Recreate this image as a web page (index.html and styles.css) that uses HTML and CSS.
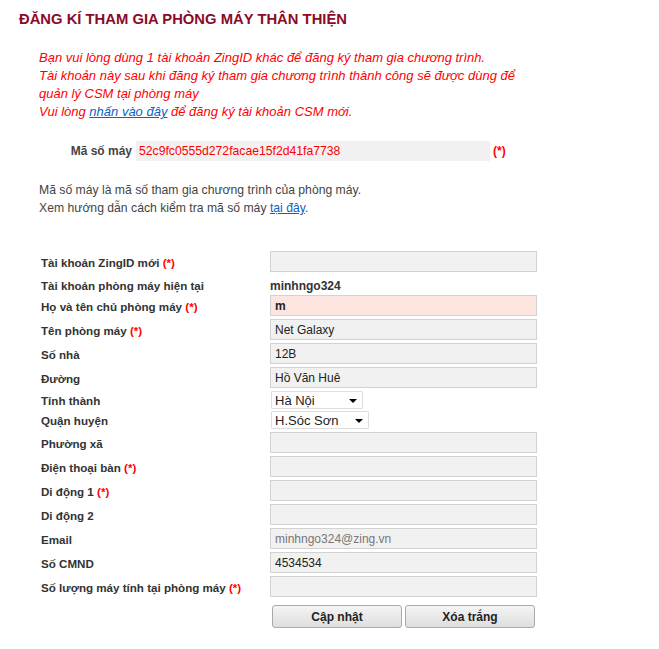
FILE: index.html
```html
<!DOCTYPE html>
<html lang="vi">
<head>
<meta charset="utf-8">
<title>Đăng kí tham gia phòng máy thân thiện</title>
<link rel="stylesheet" href="styles.css">
</head>
<body>
<div class="page">
  <h1 class="title">ĐĂNG KÍ THAM GIA PHÒNG MÁY THÂN THIỆN</h1>
  <p class="notice">Bạn vui lòng dùng 1 tài khoản ZingID khác để đăng ký tham gia chương trình.<br>Tài khoản này sau khi đăng ký tham gia chương trình thành công sẽ được dùng để<br>quản lý CSM tại phòng máy<br>Vui lòng <a href="#" class="link">nhấn vào đây</a> để đăng ký tài khoản CSM mới.</p>

  <div class="code-row">
    <span class="code-label">Mã số máy</span>
    <span class="code-box">52c9fc0555d272facae15f2d41fa7738</span>
    <span class="req">(*)</span>
  </div>

  <p class="help">Mã số máy là mã số tham gia chương trình của phòng máy.<br>Xem hướng dẫn cách kiểm tra mã số máy <a href="#" class="link">tại đây</a>.</p>

  <form class="form">
    <div class="row"><span class="label">Tài khoản ZingID mới <span class="req">(*)</span></span><input class="field" type="text"></div>
    <div class="row row-text"><span class="label">Tài khoản phòng máy hiện tại</span><span class="value">minhngo324</span></div>
    <div class="row"><span class="label">Họ và tên chủ phòng máy <span class="req">(*)</span></span><input class="field field-error" type="text" value="m"></div>
    <div class="row"><span class="label">Tên phòng máy <span class="req">(*)</span></span><input class="field" type="text" value="Net Galaxy"></div>
    <div class="row"><span class="label">Số nhà</span><input class="field" type="text" value="12B"></div>
    <div class="row"><span class="label">Đường</span><input class="field" type="text" value="Hồ Văn Huê"></div>
    <div class="row row-sel1"><span class="label">Tỉnh thành</span><span class="select select-1"><select><option>Hà Nội</option></select></span></div>
    <div class="row row-sel2"><span class="label">Quận huyện</span><span class="select select-2"><select><option>H.Sóc Sơn</option></select></span></div>
    <div class="row"><span class="label">Phường xã</span><input class="field" type="text"></div>
    <div class="row"><span class="label">Điện thoại bàn <span class="req">(*)</span></span><input class="field" type="text"></div>
    <div class="row"><span class="label">Di động 1 <span class="req">(*)</span></span><input class="field" type="text"></div>
    <div class="row"><span class="label">Di động 2</span><input class="field" type="text"></div>
    <div class="row"><span class="label">Email</span><input class="field field-muted" type="text" value="minhngo324@zing.vn"></div>
    <div class="row"><span class="label">Số CMND</span><input class="field" type="text" value="4534534"></div>
    <div class="row"><span class="label">Số lượng máy tính tại phòng máy <span class="req">(*)</span></span><input class="field" type="text"></div>
    <div class="actions">
      <button type="button" class="btn">Cập nhật</button>
      <button type="button" class="btn">Xóa trắng</button>
    </div>
  </form>
</div>
</body>
</html>
```
FILE: styles.css
```css
html, body {
  margin: 0;
  padding: 0;
  background: #fff;
}
body {
  font-family: "Liberation Sans", Arial, sans-serif;
  color: #333;
}
.page {
  padding: 0 19px;
}
.title {
  margin: 0;
  padding-top: 10px;
  font-size: 14.8px;
  line-height: 18px;
  font-weight: bold;
  color: #8c0a28;
}
.notice {
  margin: 21px 0 0;
  padding-left: 20px;
  font-size: 13px;
  line-height: 18px;
  font-style: italic;
  color: #f00;
}
.link {
  color: #0b61c4;
  text-decoration: underline;
}
.code-row {
  display: flex;
  align-items: center;
  margin-top: 20px;
  height: 20px;
}
.code-label {
  width: 113px;
  text-align: right;
  font-size: 12px;
  font-weight: bold;
  color: #444;
  margin-right: 4px;
}
.code-box {
  width: 351px;
  height: 20px;
  line-height: 20px;
  padding-left: 3px;
  background: #f1f1f1;
  color: #f00;
  font-size: 12.2px;
}
.code-row .req {
  margin-left: 3px;
  font-size: 12px;
}
.req {
  color: #f00;
  font-weight: bold;
}
.help {
  margin: 20px 0 0;
  padding-left: 20px;
  font-size: 12.2px;
  line-height: 18px;
  color: #444;
}
.form {
  margin: 34px 0 0 22px;
}
.row {
  display: flex;
  align-items: flex-start;
  height: 24px;
}
.row-text {
  height: 20px;
  align-items: center;
}
.row-sel1 {
  height: 20px;
}
.row-sel2 {
  height: 21px;
}
.label {
  width: 229px;
  flex: none;
  font-size: 11.6px;
  font-weight: bold;
  color: #333;
  line-height: 21px;
  padding-top: 1px;
}
.row-text .label {
  padding-top: 1px;
}
.row-sel1 .label,
.row-sel2 .label {
  line-height: 18px;
}
.value {
  font-size: 12px;
  font-weight: bold;
  color: #333;
  padding-top: 1px;
}
.field {
  box-sizing: border-box;
  width: 267px;
  height: 21px;
  margin: 0;
  padding: 0 4px;
  border: 1px solid #d2d2d2;
  background: #f1f1f1;
  font-family: "Liberation Sans", Arial, sans-serif;
  font-size: 12px;
  color: #222;
  outline: none;
}
.field-error {
  background: #fde5df;
  font-weight: bold;
}
.field-muted {
  color: #777;
}
.select {
  position: relative;
  display: block;
  margin-left: 1px;
}
.select-1 { width: 92px; }
.select-2 { width: 98px; }
.select select {
  -webkit-appearance: none;
  appearance: none;
  box-sizing: border-box;
  display: block;
  width: 100%;
  height: 18px;
  margin: 0;
  padding: 0 0 0 3px;
  border: 1px solid #ddd;
  border-radius: 1px;
  background: #fff;
  font-family: "Liberation Sans", Arial, sans-serif;
  font-size: 13px;
  color: #222;
  outline: none;
}
.select::after {
  content: "";
  position: absolute;
  right: 6px;
  top: 8px;
  border-left: 4px solid transparent;
  border-right: 4px solid transparent;
  border-top: 4px solid #000;
  pointer-events: none;
}
.actions {
  display: flex;
  gap: 3px;
  margin: 5px 0 0 231px;
}
.btn {
  box-sizing: border-box;
  width: 130px;
  height: 23px;
  margin: 0;
  padding: 0;
  border: 1px solid #a9a9a9;
  border-radius: 3px;
  background: linear-gradient(#f4f4f4, #dedede);
  font-family: "Liberation Sans", Arial, sans-serif;
  font-size: 12px;
  font-weight: bold;
  color: #222;
}
```
